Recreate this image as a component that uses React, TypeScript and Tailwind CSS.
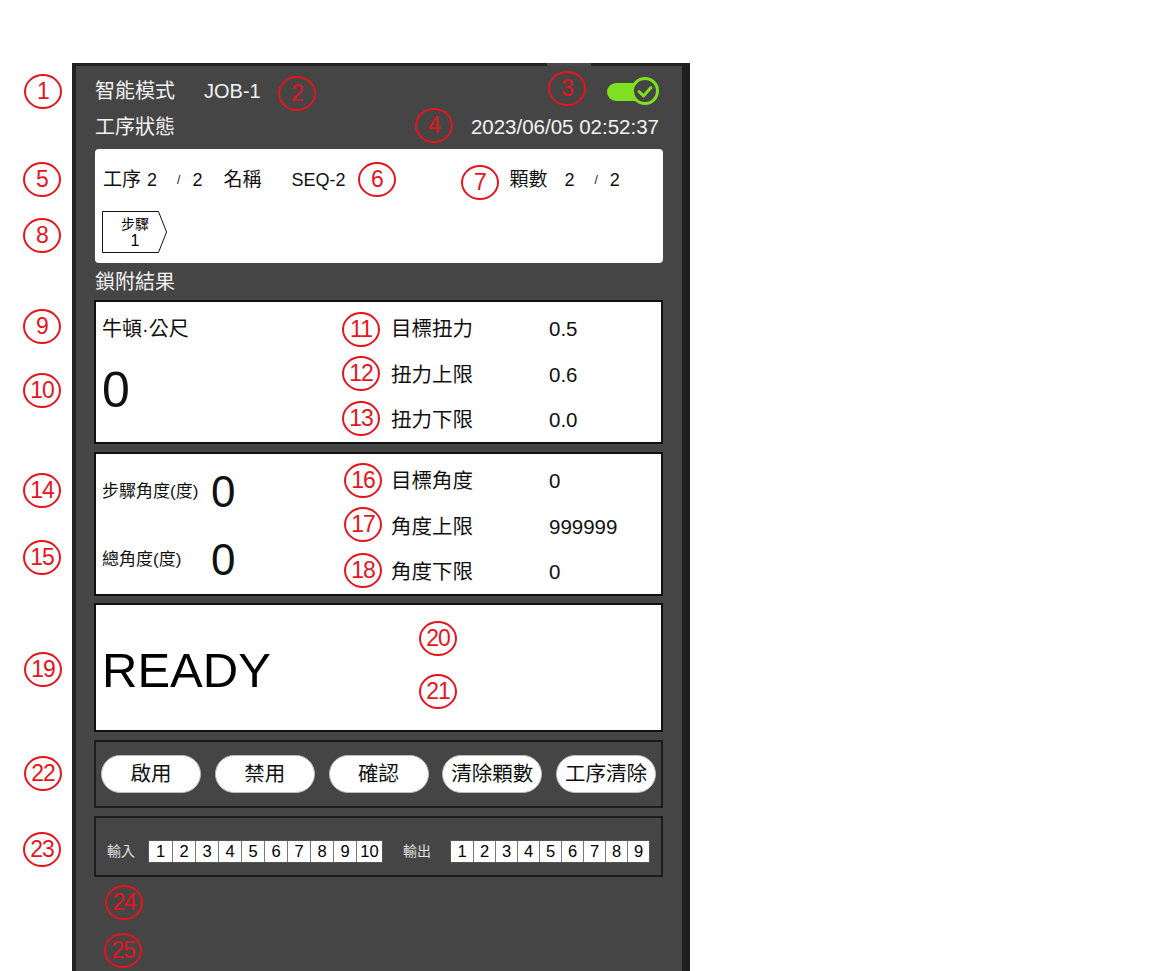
import React from "react";

const marks: [number, number, number][] = [
  [1, 43, 91], [2, 297, 93], [3, 567, 88], [4, 434, 125], [5, 42, 179],
  [6, 377, 179], [7, 480, 182], [8, 42, 235], [9, 42, 326], [10, 42, 390],
  [11, 361, 329], [12, 361, 373], [13, 361, 418], [14, 42, 490], [15, 42, 557],
  [16, 363, 480], [17, 363, 524], [18, 363, 570], [19, 43, 669], [20, 438, 638],
  [21, 438, 691], [22, 43, 773], [23, 42, 849], [24, 124, 902], [25, 123, 950],
];

function Mark({ n, x, y }: { n: number; x: number; y: number }) {
  return (
    <div
      className="absolute w-[38px] h-[35px] rounded-[50%] border-[2.5px] border-[#e8141c] text-[#e8141c] text-[23px] leading-none flex items-center justify-center tracking-[-1px] font-['Liberation_Sans',sans-serif]"
      style={{ left: x - 19, top: y - 17.5 }}
    >
      {n}
    </div>
  );
}

function Toggle() {
  return (
    <svg width="54" height="30" viewBox="0 0 54 30">
      <rect x="1" y="7" width="42" height="18" rx="9" fill="#7ee01e" />
      <circle cx="39" cy="15" r="12.5" fill="#454545" stroke="#7ee01e" strokeWidth="3" />
      <path d="M33 15.5 L37.5 20 L45 11.5" fill="none" stroke="#7ee01e" strokeWidth="3" strokeLinecap="round" strokeLinejoin="round" />
    </svg>
  );
}

function Step() {
  return (
    <div className="relative w-[66px] h-[42px] -ml-[1px] flex flex-col items-center text-black">
      <svg className="absolute inset-0" width="66" height="42" viewBox="0 0 66 42">
        <polygon points="0.5,0.5 56.5,0.5 64.5,21 56.5,41.5 0.5,41.5" fill="white" stroke="#111" strokeWidth="1" />
      </svg>
      <div className="relative w-[58px] text-center text-[14px] leading-[16px] mt-[5px]">步驟</div>
      <div className="relative w-[58px] text-center text-[16px] leading-[18px]">1</div>
    </div>
  );
}

function ParamRows({ rows }: { rows: [string, string][] }) {
  return (
    <div className="flex-1 pt-[5px]">
      {rows.map(([l, v]) => (
        <div key={l} className="h-[45.5px] flex items-center text-[20.5px] text-[#111]">
          <div className="w-[158px]">{l}</div>
          <div>{v}</div>
        </div>
      ))}
    </div>
  );
}

function Cells({ items, w, last }: { items: string[]; w: string; last?: string }) {
  return (
    <div className="flex h-[23px] border border-[#555] bg-white">
      {items.map((t, i) => (
        <div
          key={t}
          className={
            "h-full flex items-center justify-center text-[16.5px] text-black " +
            (i > 0 ? "border-l border-[#777] " : "") +
            (last && i === items.length - 1 ? last : w)
          }
        >
          {t}
        </div>
      ))}
    </div>
  );
}

export default function App() {
  return (
    <div className="relative w-[1152px] h-[971px] bg-white overflow-hidden pt-[63px] pl-[72px] font-['Liberation_Sans','Noto_Sans_CJK_TC',sans-serif]">
      <div className="relative w-[618px] h-[908px] bg-[#454545] border-l-4 border-t-[3px] border-r-8 border-l-[#222] border-t-[#222] border-r-[#1f1f1f] pl-[18px] pr-[19px]">
        <div className="absolute -top-[3px] left-[471px] w-[44px] h-[3px] bg-[#4a4a4a]" />
        {/* header */}
        <div className="h-[49px] flex items-center text-[#f2f2f2] text-[20px]">
          <span className="ml-[1px]">智能模式</span>
          <span className="ml-[29px]">JOB-1</span>
          <div className="flex-1" />
          <div className="mr-[3px] mt-[1px]">
            <Toggle />
          </div>
        </div>
        <div className="h-[24px] flex items-center justify-between text-[#f2f2f2] text-[20px]">
          <span className="ml-[1px]">工序狀態</span>
          <span className="mr-[4px] text-[20.5px]">2023/06/05 02:52:37</span>
        </div>
        {/* card */}
        <div className="mt-[10px] ml-[1px] h-[114px] bg-white rounded-[4px] pl-[8px] pt-[19px] text-[#111]">
          <div className="h-[24px] flex items-center text-[18px]">
            <span className="text-[19px]">工序</span>
            <span className="ml-[6px]">2</span>
            <span className="ml-[20px] text-[12px]">/</span>
            <span className="ml-[12px]">2</span>
            <span className="ml-[21px] text-[19px]">名稱</span>
            <span className="ml-[30px]">SEQ-2</span>
            <span className="ml-[164px] text-[19px]">顆數</span>
            <span className="ml-[17px]">2</span>
            <span className="ml-[20px] text-[12px]">/</span>
            <span className="ml-[12px]">2</span>
          </div>
          <div className="mt-[19px]">
            <Step />
          </div>
        </div>
        <div className="h-[37px] flex items-center text-[#f2f2f2] text-[20px]">
          <span className="ml-[1px]">鎖附結果</span>
        </div>
        {/* torque */}
        <div className="h-[144px] border-2 border-[#111] bg-white flex">
          <div className="w-[295px] pl-[6px] pt-[4px] text-[#111]">
            <div className="h-[45px] flex items-center text-[20px]">牛頓·公尺</div>
            <div className="mt-[14px] text-[50px] leading-none">0</div>
          </div>
          <ParamRows rows={[["目標扭力", "0.5"], ["扭力上限", "0.6"], ["扭力下限", "0.0"]]} />
        </div>
        {/* angle */}
        <div className="mt-[8px] h-[144px] border-2 border-[#111] bg-white flex">
          <div className="w-[295px] pl-[6px] pt-[4px] text-[#111]">
            <div className="h-[68px] flex items-center">
              <div className="w-[109px] text-[17px]">步驟角度(度)</div>
              <div className="text-[44px] leading-none">0</div>
            </div>
            <div className="h-[68px] flex items-center">
              <div className="w-[109px] text-[17px]">總角度(度)</div>
              <div className="text-[44px] leading-none">0</div>
            </div>
          </div>
          <ParamRows rows={[["目標角度", "0"], ["角度上限", "999999"], ["角度下限", "0"]]} />
        </div>
        {/* ready */}
        <div className="mt-[7px] h-[129px] border-2 border-[#111] bg-white flex items-center pl-[6px] pt-[5px]">
          <span className="text-[49px] leading-none text-black">READY</span>
        </div>
        {/* buttons */}
        <div className="mt-[8px] h-[68px] border-2 border-[#1c1c1c] flex items-center justify-between px-[5px]">
          {["啟用", "禁用", "確認", "清除顆數", "工序清除"].map((b) => (
            <div key={b} className="w-[100px] h-[38px] rounded-full bg-white border border-[#bdbdbd] flex items-center justify-center text-[20.5px] text-[#111]">
              {b}
            </div>
          ))}
        </div>
        {/* io */}
        <div className="mt-[8px] h-[61px] border-2 border-[#1c1c1c] flex items-center pl-[11px] pt-[9px]">
          <span className="text-[14px] text-[#e0e0e0]">輸入</span>
          <div className="ml-[13px]">
            <Cells items={["1", "2", "3", "4", "5", "6", "7", "8", "9", "10"]} w="w-[23px]" last="w-[26px]" />
          </div>
          <span className="ml-[20px] text-[14px] text-[#e0e0e0]">輸出</span>
          <div className="ml-[19px]">
            <Cells items={["1", "2", "3", "4", "5", "6", "7", "8", "9"]} w="w-[22px]" />
          </div>
        </div>
      </div>
      {marks.map(([n, x, y]) => (
        <Mark key={n} n={n} x={x} y={y} />
      ))}
    </div>
  );
}
